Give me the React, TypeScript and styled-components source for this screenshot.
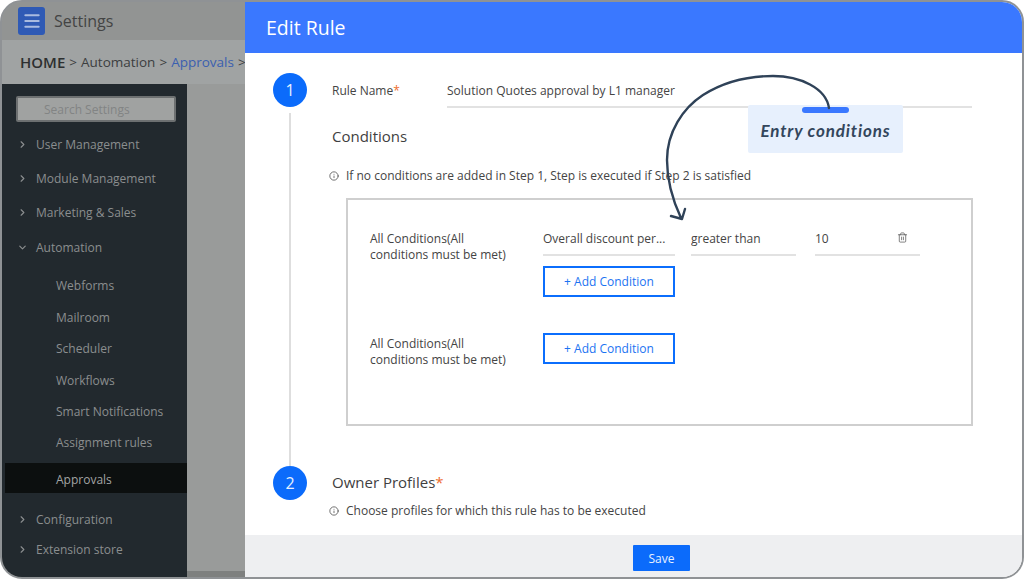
import React from "react";
import styled, { createGlobalStyle } from "styled-components";
import { ChevronDown, ChevronRight, Info, Menu, Trash2 } from "lucide-react";

const GlobalStyle = createGlobalStyle`
  html, body {
    margin: 0;
    padding: 0;
    background: #fff;
    font-family: "Open Sans", "Liberation Sans", sans-serif;
  }
  * { box-sizing: border-box; }
`;

const Frame = styled.div`
  position: relative;
  width: 1024px;
  height: 579px;
  border: 2px solid #8f9295;
  border-radius: 22px;
  overflow: hidden;
  display: flex;
  flex-direction: column;
  background: #999b9a;
`;

const TopBar = styled.header`
  height: 38px;
  flex: none;
  display: flex;
  align-items: center;
  gap: 9px;
  padding: 0 0 0 16px;
  background: #929493;
`;

const MenuButton = styled.div`
  width: 27px;
  height: 28px;
  border-radius: 3px;
  background: #2f5ab5;
  color: #a9bbe0;
  display: flex;
  align-items: center;
  justify-content: center;
`;

const TopTitle = styled.span`
  font-size: 16px;
  color: #444;
`;

const Breadcrumb = styled.nav`
  height: 44px;
  flex: none;
  display: flex;
  align-items: center;
  gap: 4px;
  padding-left: 18px;
  background: #a0a3a3;
  font-size: 13.5px;
  color: #3c3e3f;
  white-space: nowrap;
  overflow: hidden;
`;

const Home = styled.b`
  font-size: 15px;
  font-weight: 600;
  color: #2d2f30;
`;

const Crumb = styled.span<{ $active?: boolean }>`
  color: ${({ $active }) => ($active ? "#3b5fb0" : "#3c3e3f")};
`;

const Main = styled.div`
  flex: 1;
  display: flex;
  min-height: 0;
`;

const Sidebar = styled.aside`
  width: 185px;
  flex: none;
  background: #22292e;
  color: #8b8e8f;
  font-size: 12px;
  padding-top: 12px;
`;

const Search = styled.div`
  width: 160px;
  height: 26px;
  margin: 0 0 5px 14px;
  padding-left: 26px;
  border: 2px solid #6d7071;
  border-radius: 2px;
  background: #a0a2a1;
  color: #828484;
  display: flex;
  align-items: center;
  font-size: 12px;
`;

const NavItem = styled.div<{ $height: number; $sub?: boolean; $active?: boolean }>`
  height: ${({ $height }) => $height}px;
  display: flex;
  align-items: center;
  gap: 8px;
  padding-left: ${({ $sub }) => ($sub ? "54px" : "15px")};
  ${({ $active }) =>
    $active
      ? "margin-left: 3px; padding: 3px 0 0 51px; background: #0c0f0f; color: #a3a5a5;"
      : ""}
`;

const Spacer = styled.div<{ $height: number }>`
  height: ${({ $height }) => $height}px;
`;

const BottomStrip = styled.div`
  position: absolute;
  left: 185px;
  right: 0;
  bottom: 0;
  height: 6px;
  background: #7e807f;
`;

const Drawer = styled.section`
  position: absolute;
  top: 0;
  left: 243px;
  right: 0;
  bottom: 0;
  display: flex;
  flex-direction: column;
  background: #fff;
`;

const DrawerHeader = styled.div`
  height: 51px;
  flex: none;
  padding-left: 21px;
  display: flex;
  align-items: center;
  background: #3a78ff;
  color: #fff;
  font-size: 19.5px;
`;

const DrawerBody = styled.div`
  flex: 1;
  min-height: 0;
  overflow: hidden;
  padding: 20px 50px 0 28px;
  color: #444;
`;

const Step = styled.div<{ $height: number }>`
  display: flex;
  gap: 25px;
  height: ${({ $height }) => $height}px;
`;

const Rail = styled.div`
  width: 34px;
  flex: none;
  display: flex;
  flex-direction: column;
  align-items: center;
`;

const StepCircle = styled.div`
  width: 34px;
  height: 34px;
  flex: none;
  border-radius: 50%;
  background: #0b6bfb;
  color: #e6f0ff;
  font-size: 16px;
  display: flex;
  align-items: center;
  justify-content: center;
`;

const RailLine = styled.div`
  width: 2px;
  flex: 1;
  margin-top: 6px;
  background: #dedede;
`;

const StepContent = styled.div`
  flex: 1;
  min-width: 0;
`;

const RuleRow = styled.div`
  display: flex;
  height: 35px;
  font-size: 12px;
`;

const RuleLabel = styled.div`
  width: 115px;
  flex: none;
  padding-top: 9px;
`;

const Star = styled.span`
  color: #ee6c2e;
`;

const RuleInput = styled.div`
  flex: 1;
  padding-top: 9px;
  border-bottom: 2px solid #e2e2e2;
`;

const SectionTitle = styled.h3<{ $top: number }>`
  margin: ${({ $top }) => $top}px 0 0;
  font-size: 15px;
  font-weight: 400;
  line-height: 20px;
  color: #3f3f3f;
`;

const Note = styled.div<{ $top: number }>`
  display: flex;
  align-items: center;
  gap: 7px;
  margin: ${({ $top }) => $top}px 0 0 -3px;
  font-size: 12px;
  line-height: 18px;
  color: #444;
`;

const Box = styled.div`
  width: 627px;
  height: 228px;
  margin: 13px 0 0 14px;
  padding: 29px 0 0 22px;
  border: 2px solid #cfcfcf;
`;

const GroupRow = styled.div<{ $height: number }>`
  display: flex;
  height: ${({ $height }) => $height}px;
`;

const GroupLabel = styled.div<{ $top: number }>`
  width: 173px;
  flex: none;
  padding: ${({ $top }) => $top}px 20px 0 0;
  font-size: 12px;
  line-height: 16px;
  color: #444;
`;

const GroupColumn = styled.div`
  display: flex;
  flex-direction: column;
  gap: 10px;
`;

const Fields = styled.div`
  display: flex;
`;

const Field = styled.div<{ $width: number; $gap: number }>`
  position: relative;
  width: ${({ $width }) => $width}px;
  height: 27px;
  margin-right: ${({ $gap }) => $gap}px;
  padding-top: 1px;
  border-bottom: 2px solid #e2e2e2;
  font-size: 12px;
  line-height: 17px;
  white-space: nowrap;
  overflow: hidden;
  color: #444;
`;

const FieldIcon = styled.span`
  position: absolute;
  top: 3px;
  right: 12px;
  color: #555;
  line-height: 0;
`;

const AddButton = styled.button`
  width: 132px;
  height: 31px;
  padding: 0;
  border: 2px solid #0b6efd;
  background: #fff;
  color: #1c73f2;
  font-family: inherit;
  font-size: 12px;
`;

const Footer = styled.div`
  height: 42px;
  flex: none;
  display: flex;
  align-items: center;
  justify-content: center;
  padding: 4px 0 0 56px;
  background: #eeeff1;
`;

const SaveButton = styled.button`
  width: 57px;
  height: 26px;
  padding: 0;
  border: 0;
  border-radius: 1px;
  background: #0b6bfb;
  color: #e8f1ff;
  font-family: inherit;
  font-size: 12px;
`;

const Callout = styled.div`
  position: absolute;
  left: 746px;
  top: 103px;
  width: 155px;
  height: 48px;
  padding-top: 3px;
  border-radius: 2px;
  background: #e7f0fd;
  color: #33465c;
  font-family: "Lato", sans-serif;
  font-size: 17px;
  font-style: italic;
  font-weight: 700;
  letter-spacing: 0.85px;
  display: flex;
  align-items: center;
  justify-content: center;
  white-space: nowrap;
`;

const CalloutPill = styled.div`
  position: absolute;
  left: 54px;
  top: 2px;
  width: 47px;
  height: 6px;
  border-radius: 3px;
  background: #3a78ff;
`;

const ArrowSvg = styled.svg`
  position: absolute;
  left: -2px;
  top: -2px;
  pointer-events: none;
`;

const topItems = ["User Management", "Module Management", "Marketing & Sales"];
const subItems: [string, number][] = [
  ["Webforms", 32],
  ["Mailroom", 32],
  ["Scheduler", 31],
  ["Workflows", 32],
  ["Smart Notifications", 30],
  ["Assignment rules", 32],
];

function App() {
  return (
    <>
      <GlobalStyle />
      <Frame>
        <TopBar>
          <MenuButton>
            <Menu size={20} strokeWidth={2.4} />
          </MenuButton>
          <TopTitle>Settings</TopTitle>
        </TopBar>
        <Breadcrumb>
          <Home>HOME</Home>
          <Crumb>&gt;</Crumb>
          <Crumb>Automation</Crumb>
          <Crumb>&gt;</Crumb>
          <Crumb $active>Approvals</Crumb>
          <Crumb>&gt;</Crumb>
        </Breadcrumb>
        <Main>
          <Sidebar>
            <Search>Search Settings</Search>
            {topItems.map((label) => (
              <NavItem key={label} $height={34}>
                <ChevronRight size={11} strokeWidth={2.5} />
                {label}
              </NavItem>
            ))}
            <NavItem $height={36}>
              <ChevronDown size={11} strokeWidth={2.5} />
              Automation
            </NavItem>
            <Spacer $height={4} />
            {subItems.map(([label, height]) => (
              <NavItem key={label} $height={height} $sub>
                {label}
              </NavItem>
            ))}
            <Spacer $height={5} />
            <NavItem $height={30} $sub $active>
              Approvals
            </NavItem>
            <Spacer $height={10} />
            <NavItem $height={32}>
              <ChevronRight size={11} strokeWidth={2.5} />
              Configuration
            </NavItem>
            <NavItem $height={29}>
              <ChevronRight size={11} strokeWidth={2.5} />
              Extension store
            </NavItem>
          </Sidebar>
        </Main>
        <BottomStrip />
        <Drawer>
          <DrawerHeader>Edit Rule</DrawerHeader>
          <DrawerBody>
            <Step $height={393}>
              <Rail>
                <StepCircle>1</StepCircle>
                <RailLine />
              </Rail>
              <StepContent>
                <RuleRow>
                  <RuleLabel>
                    Rule Name<Star>*</Star>
                  </RuleLabel>
                  <RuleInput>Solution Quotes approval by L1 manager</RuleInput>
                </RuleRow>
                <SectionTitle $top={18}>Conditions</SectionTitle>
                <Note $top={21}>
                  <Info size={10} strokeWidth={1.8} />
                  If no conditions are added in Step 1, Step is executed if Step 2 is satisfied
                </Note>
                <Box>
                  <GroupRow $height={104}>
                    <GroupLabel $top={2}>All Conditions(All conditions must be met)</GroupLabel>
                    <GroupColumn>
                      <Fields>
                        <Field $width={132} $gap={16}>
                          Overall discount per...
                        </Field>
                        <Field $width={105} $gap={19}>
                          greater than
                        </Field>
                        <Field $width={105} $gap={0}>
                          10
                          <FieldIcon>
                            <Trash2 size={11} strokeWidth={1.6} />
                          </FieldIcon>
                        </Field>
                      </Fields>
                      <AddButton>+ Add Condition</AddButton>
                    </GroupColumn>
                  </GroupRow>
                  <GroupRow $height={60}>
                    <GroupLabel $top={3}>All Conditions(All conditions must be met)</GroupLabel>
                    <AddButton>+ Add Condition</AddButton>
                  </GroupRow>
                </Box>
              </StepContent>
            </Step>
            <Step $height={60}>
              <Rail>
                <StepCircle>2</StepCircle>
              </Rail>
              <StepContent>
                <SectionTitle $top={6}>
                  Owner Profiles<Star>*</Star>
                </SectionTitle>
                <Note $top={10}>
                  <Info size={10} strokeWidth={1.8} />
                  Choose profiles for which this rule has to be executed
                </Note>
              </StepContent>
            </Step>
          </DrawerBody>
          <Footer>
            <SaveButton>Save</SaveButton>
          </Footer>
        </Drawer>
        <Callout>
          <CalloutPill />
          Entry conditions
        </Callout>
        <ArrowSvg width="1024" height="580" viewBox="0 0 1024 580" fill="none">
          <path
            d="M829 108C826 88 800 76 773 76C745 76 722 83 703 95C683 108 667 132 667 160C667 182 674 203 681 218M671 216L682 219L685 209"
            stroke="#2f4258"
            strokeWidth="2.4"
            strokeLinecap="round"
            strokeLinejoin="round"
          />
        </ArrowSvg>
      </Frame>
    </>
  );
}

export default App;
